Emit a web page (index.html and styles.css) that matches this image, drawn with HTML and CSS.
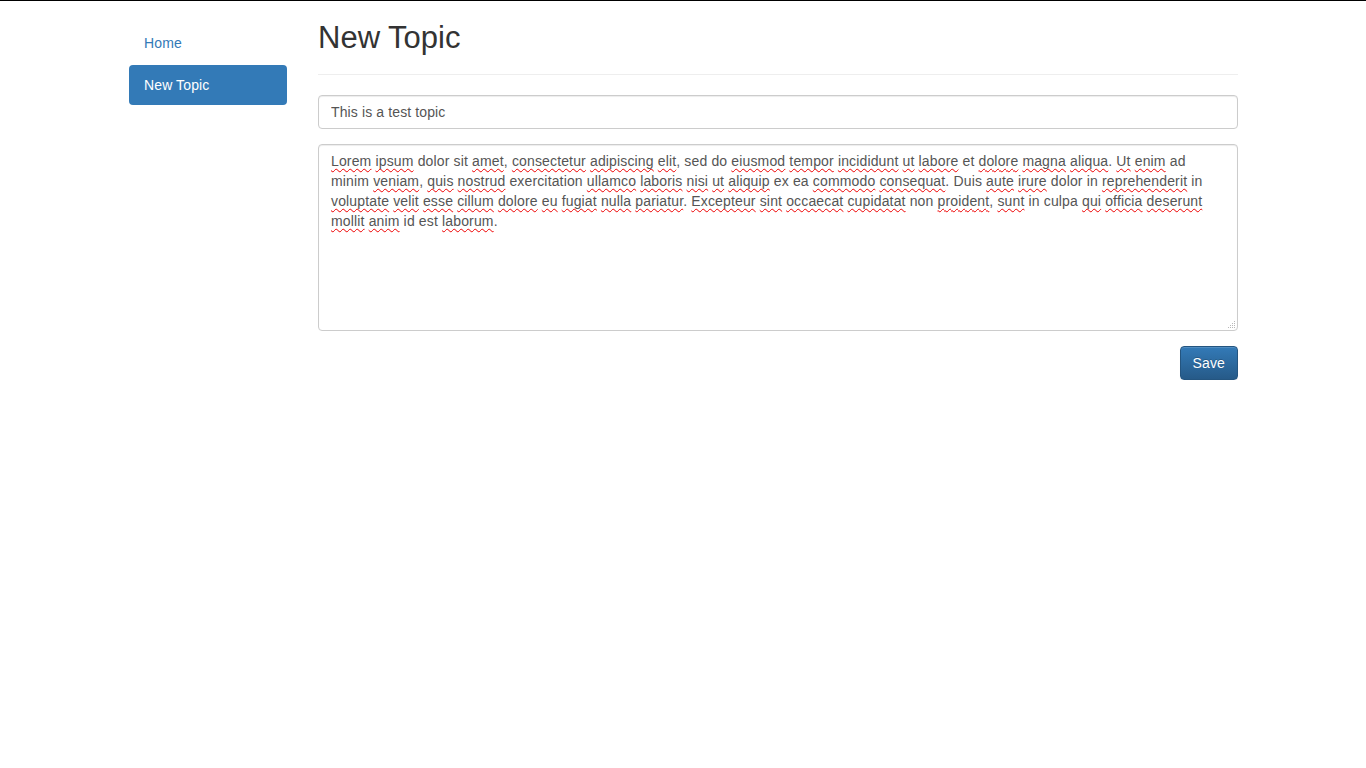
FILE: index.html
```html
<!DOCTYPE html>
<html lang="en">
<head>
<meta charset="utf-8">
<title>New Topic</title>
<link rel="stylesheet" href="styles.css">
</head>
<body>
<div class="container">
  <aside class="sidebar">
    <ul class="nav-pills">
      <li><a href="#" class="pill">Home</a></li>
      <li><a href="#" class="pill active">New Topic</a></li>
    </ul>
  </aside>
  <main class="main">
    <div class="page-header">
      <h1>New Topic</h1>
    </div>
    <form class="topic-form">
      <div class="form-group">
        <input class="form-control" type="text" value="This is a test topic">
      </div>
      <div class="form-group">
        <div class="form-control textarea" role="textbox" aria-multiline="true"><span class="sp">Lorem</span> <span class="sp">ipsum</span> dolor sit <span class="sp">amet</span>, <span class="sp">consectetur</span> <span class="sp">adipiscing</span> <span class="sp">elit</span>, sed do <span class="sp">eiusmod</span> <span class="sp">tempor</span> <span class="sp">incididunt</span> <span class="sp">ut</span> <span class="sp">labore</span> et <span class="sp">dolore</span> <span class="sp">magna</span> <span class="sp">aliqua</span>. <span class="sp">Ut</span> <span class="sp">enim</span> ad minim <span class="sp">veniam</span>, <span class="sp">quis</span> <span class="sp">nostrud</span> exercitation <span class="sp">ullamco</span> <span class="sp">laboris</span> <span class="sp">nisi</span> <span class="sp">ut</span> <span class="sp">aliquip</span> ex ea <span class="sp">commodo</span> <span class="sp">consequat</span>. Duis <span class="sp">aute</span> <span class="sp">irure</span> dolor in <span class="sp">reprehenderit</span> in <span class="sp">voluptate</span> <span class="sp">velit</span> <span class="sp">esse</span> <span class="sp">cillum</span> <span class="sp">dolore</span> <span class="sp">eu</span> <span class="sp">fugiat</span> <span class="sp">nulla</span> <span class="sp">pariatur</span>. <span class="sp">Excepteur</span> <span class="sp">sint</span> <span class="sp">occaecat</span> <span class="sp">cupidatat</span> non <span class="sp">proident</span>, <span class="sp">sunt</span> in culpa <span class="sp">qui</span> <span class="sp">officia</span> <span class="sp">deserunt</span> <span class="sp">mollit</span> <span class="sp">anim</span> id est <span class="sp">laborum</span>.<svg class="grip" width="9" height="9" viewBox="0 0 9 9"><g fill="#b8b8b8"><rect x="7" y="1" width="1" height="1"/><rect x="5" y="3" width="1" height="1"/><rect x="7" y="3" width="1" height="1"/><rect x="3" y="5" width="1" height="1"/><rect x="5" y="5" width="1" height="1"/><rect x="7" y="5" width="1" height="1"/><rect x="1" y="7" width="1" height="1"/><rect x="3" y="7" width="1" height="1"/><rect x="5" y="7" width="1" height="1"/><rect x="7" y="7" width="1" height="1"/></g></svg></div>
      </div>
      <div class="actions">
        <button type="button" class="btn-primary">Save</button>
      </div>
    </form>
  </main>
</div>
</body>
</html>
```

FILE: styles.css
```css
html, body {
  margin: 0;
  padding: 0;
}
body {
  border-top: 1px solid #000;
  background: #fff;
  font-family: "Liberation Sans", Arial, sans-serif;
  font-size: 14px;
  line-height: 20px;
  letter-spacing: 0.12px;
  color: #333;
}
.container {
  width: 1140px;
  margin: 0 auto;
  display: flex;
}
.sidebar {
  width: 190px;
  box-sizing: border-box;
  padding: 22px 16px 0 16px;
}
.nav-pills {
  list-style: none;
  margin: 0;
  padding: 0;
  display: flex;
  flex-direction: column;
  gap: 2px;
}
.pill {
  display: block;
  padding: 10px 15px;
  border-radius: 4px;
  color: #337ab7;
  text-decoration: none;
}
.pill.active {
  background: #337ab7;
  color: #fff;
}
.main {
  width: 950px;
  box-sizing: border-box;
  padding: 0 15px;
}
.page-header {
  margin: 17px 0 20px;
  padding-bottom: 6px;
  border-bottom: 1px solid #eee;
}
.page-header h1 {
  margin: 0 0 10px;
  font-size: 31px;
  font-weight: 500;
  line-height: 40px;
  letter-spacing: 0;
  color: #333;
}
.topic-form {
  margin: 0;
}
.form-group {
  margin-bottom: 15px;
}
.form-control {
  display: block;
  width: 100%;
  box-sizing: border-box;
  height: 34px;
  padding: 6px 12px;
  font-family: "Liberation Sans", Arial, sans-serif;
  font-size: 14px;
  line-height: 20px;
  letter-spacing: 0.12px;
  color: #555;
  background: #fff;
  border: 1px solid #ccc;
  border-radius: 4px;
  box-shadow: inset 0 1px 1px rgba(0,0,0,.075);
  margin: 0;
}
.textarea {
  position: relative;
  height: 187px;
  padding: 6px 18px 6px 12px;
  letter-spacing: 0.15px;
}
.sp {
  text-decoration: underline wavy #e00;
  text-decoration-thickness: 1px;
  text-underline-offset: 2px;
  text-decoration-skip-ink: none;
}
.grip {
  position: absolute;
  right: 1px;
  bottom: 1px;
  display: block;
}
.actions {
  display: flex;
  justify-content: flex-end;
}
.btn-primary {
  height: 34px;
  padding: 6px 12px;
  font-family: "Liberation Sans", Arial, sans-serif;
  font-size: 14px;
  line-height: 20px;
  letter-spacing: 0.12px;
  color: #fff;
  background: linear-gradient(to bottom, #337ab7 0, #265a88 100%);
  border: 1px solid #245580;
  border-radius: 4px;
  text-shadow: 0 -1px 0 rgba(0,0,0,.2);
  box-shadow: inset 0 1px 0 rgba(255,255,255,.15), 0 1px 1px rgba(0,0,0,.075);
  cursor: pointer;
}
```
